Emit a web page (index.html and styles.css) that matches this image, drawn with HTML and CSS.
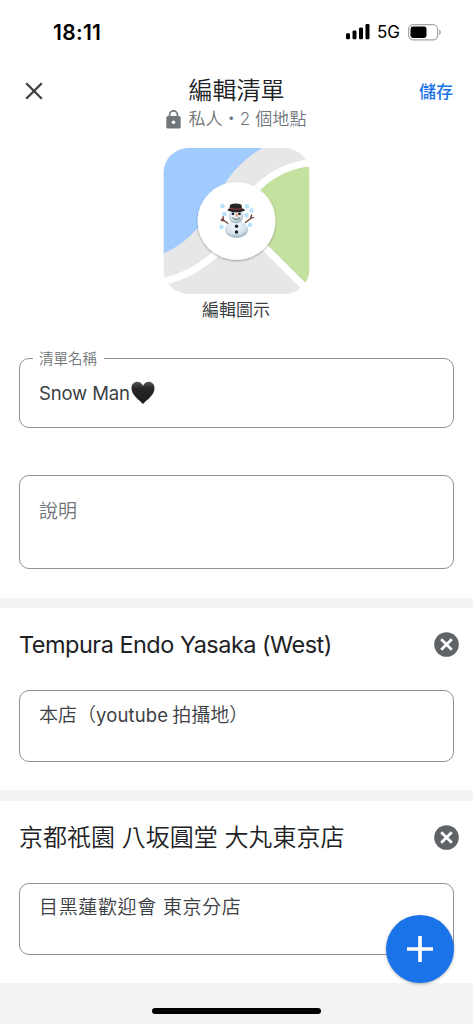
FILE: index.html
```html
<!DOCTYPE html>
<html lang="zh-Hant">
<head>
<meta charset="utf-8">
<meta name="viewport" content="width=device-width">
<title>編輯清單</title>
<link rel="stylesheet" href="styles.css">
</head>
<body>
<main class="screen">
  <div class="status">
    <span class="clock">18:11</span>
    <div class="signals">
      <svg class="bars" width="24" height="16" viewBox="0 0 24 16"><rect x="0" y="9.2" width="4" height="6" rx="1.2"/><rect x="6.5" y="6.5" width="4" height="8.7" rx="1.2"/><rect x="13" y="3.5" width="4" height="11.7" rx="1.2"/><rect x="19.5" y="0" width="4" height="15.2" rx="1.2"/></svg>
      <span class="network">5G</span>
      <svg class="battery" width="34" height="17" viewBox="0 0 34 17"><rect x=".6" y=".6" width="29" height="15.3" rx="4.6" fill="none" stroke="#a6a6a6" stroke-width="1.2"/><rect x="2.5" y="2.5" width="16" height="11.5" rx="2.4"/><path d="M31.2 5.6c2.2.7 2.2 4.600 0 5.300z" fill="#a6a6a6"/></svg>
    </div>
  </div>

  <header class="header">
    <button class="close" aria-label="關閉"><svg width="18" height="18" viewBox="0 0 18 18"><path d="M1.200 1.200l15.600 15.600M16.800 1.200l-15.600 15.600" stroke="#3c4043" stroke-width="2.300" fill="none"/></svg></button>
    <div class="heading">
      <h1 class="title">編輯清單</h1>
      <div class="privacy">
        <svg width="15" height="19" viewBox="0 0 15 19"><path d="M3.600 7V4.800a3.900 3.900 0 0 1 7.800 0V7" fill="none" stroke="#70757a" stroke-width="1.700"/><rect x=".3" y="6" width="14.400" height="12.600" rx="1.700" fill="#70757a"/><circle cx="7.500" cy="12.300" r="1.800" fill="#fff"/></svg>
        <span>私人・2 個地點</span>
      </div>
    </div>
    <button class="save">儲存</button>
  </header>

  <section class="cover">
    <svg class="map" width="147" height="146" viewBox="-.5 0 147 146">
      <defs>
        <clipPath id="tile"><rect width="146" height="146" rx="25"/></clipPath>
        <filter id="lift" x="-20%" y="-20%" width="140%" height="140%"><feDropShadow dx="0" dy="1" stdDeviation="1.200" flood-opacity=".35"/></filter>
        <radialGradient id="snow" cx=".45" cy=".3" r=".75"><stop offset="0" stop-color="#f5fbff"/><stop offset=".6" stop-color="#d6e3ec"/><stop offset="1" stop-color="#8da5b3"/></radialGradient>
      </defs>
      <g clip-path="url(#tile)">
        <path fill="#e7e7e7" d="M0 0h146v146H0z"/>
        <path fill="#a1cbff" d="M0 0h99C83 9 71 21 61 36C54 51 46 66 34 80Q20 97 0 105.500z"/>
        <path fill="#c5e1a0" d="M146 18C125 20 108 29 94 45L95 91L142 136L146 134z"/>
        <path d="M148 14.500C124 17 105 27 90 44" fill="none" stroke="#fff" stroke-width="7"/>
        <path d="M0 133.500Q29 127 52 106M98 96l43 43" fill="none" stroke="#fff" stroke-width="7"/>
      </g>
      <circle cx="73" cy="73" r="39" fill="#fff" filter="url(#lift)"/>
      <g fill="#b9e2fb"><circle cx="59" cy="58" r="2.300"/><circle cx="83.500" cy="58.500" r="2.300"/><circle cx="88" cy="62.500" r="2.300"/><circle cx="61" cy="66" r="2.300"/><circle cx="83" cy="67" r="2.200"/><circle cx="58" cy="79" r="2.300"/><circle cx="86.500" cy="77" r="2.300"/></g>
      <path d="M64.500 75.500l-6-4.500m1.500 1-.500-3.500m1 4.300-3-.600M82 74.500l5-4 1.200-3.500m-1.400 3.700 3-1.200" fill="none" stroke="#6a4336" stroke-width="1.300" stroke-linecap="round"/>
      <ellipse cx="73" cy="81.500" rx="11.500" ry="8.500" fill="url(#snow)"/>
      <circle cx="72.500" cy="68" r="7.300" fill="url(#snow)"/>
      <path d="M64 62.500q0-1.500 2-2l.5-3.700q6-2.500 11.500 0l.5 3.500q3 .700 3 2.200-8 4-17.500 0z" fill="#292626"/>
      <path d="M66.300 60.300q6 2.200 12 0" stroke="#98414a" stroke-width="1" fill="none"/>
      <g fill="#242424"><circle cx="69.500" cy="65.800" r="1.400"/><circle cx="76" cy="65.800" r="1.400"/><circle cx="73" cy="78.300" r="1.700"/><circle cx="73" cy="84" r="1.700"/></g>
      <path d="M69 69.700q4 3.500 7.500 0" stroke="#454545" stroke-width=".9" fill="none"/>
      <path d="M72.200 66h2l-.7 4z" fill="#f26a20"/>
    </svg>
    <div class="cover-label">編輯圖示</div>
  </section>

  <section class="details">
    <div class="field name-field">
      <span class="field-label">清單名稱</span>
      <span class="name-text">Snow Man</span><svg class="heart" width="24" height="24" viewBox="0 0 24 24" role="img" aria-label="黑心"><defs><linearGradient id="ink" x2="0" y2="1"><stop stop-color="#555"/><stop offset=".28" stop-color="#282828"/><stop offset="1" stop-color="#1b1b1b"/></linearGradient></defs><path d="M12 23C8.500 19 .5 14.500.5 7.300C.5 3 3.200.8 6.300.8C9 .8 11.200 2.600 12 5C12.800 2.600 15 .8 17.700.8C20.800.8 23.500 3 23.500 7.300C23.500 14.500 15.500 19 12 23Z" fill="url(#ink)"/></svg>
    </div>
    <div class="field description">說明</div>
  </section>

  <section class="place">
    <div class="place-head">
      <h2 class="place-name place-name-latin">Tempura Endo Yasaka (West)</h2>
      <button class="remove" aria-label="移除"><svg width="25" height="25" viewBox="0 0 25 25"><circle cx="12.500" cy="12.500" r="12.300" fill="#5f6368"/><path d="M7.200 7.200l10.600 10.600M17.800 7.200l-10.600 10.600" stroke="#fff" stroke-width="2.700"/></svg></button>
    </div>
    <div class="field note">本店（<span class="note-latin">youtube</span><span class="note-tail">拍攝地）</span></div>
  </section>

  <section class="place place-second">
    <div class="place-head">
      <h2 class="place-name">京都祇園 八坂圓堂 大丸東京店</h2>
      <button class="remove" aria-label="移除"><svg width="25" height="25" viewBox="0 0 25 25"><circle cx="12.500" cy="12.500" r="12.300" fill="#5f6368"/><path d="M7.200 7.200l10.600 10.600M17.800 7.200l-10.600 10.600" stroke="#fff" stroke-width="2.700"/></svg></button>
    </div>
    <div class="field note note-spaced">目黑蓮歡迎會 東京分店</div>
  </section>

  <footer class="home"><div class="home-bar"></div></footer>
  <button class="add" aria-label="新增"><svg width="26" height="26" viewBox="0 0 26 26"><path d="M13 0v26M0 13h26" stroke="#fff" stroke-width="3.600"/></svg></button>
</main>
</body>
</html>
```

FILE: styles.css
```css
* { box-sizing: border-box; }
body { margin: 0; background: #fff; }
button { border: 0; padding: 0; background: none; font: inherit; }
svg { display: block; flex: none; }
h1, h2 { margin: 0; font-weight: 350; }

.screen {
  position: relative;
  display: flex;
  flex-direction: column;
  width: 473px;
  height: 1024px;
  overflow: hidden;
  color: #202124;
  font-family: Inter, "Noto Sans CJK TC", sans-serif;
  font-weight: 350;
}
.screen > * { flex: none; }

.status { height: 64px; padding: 0 31px 0 53px; display: flex; align-items: center; justify-content: space-between; color: #000; }
.clock { font-size: 21px; font-weight: 600; letter-spacing: .3px; }
.signals { display: flex; align-items: center; }
.network { margin: 0 8px 0 7px; font-size: 17px; font-weight: 400; line-height: 20px; }

.header { height: 84px; padding: 0 20px 0 25px; display: grid; grid-template-columns: 80px 1fr 85px; align-items: start; }
.close { margin-top: 18px; justify-self: start; }
.heading { display: flex; flex-direction: column; align-items: center; }
.title { font-size: 24px; line-height: 32px; margin-top: 11px; }
.privacy { display: flex; align-items: center; gap: 7px; height: 24px; font-size: 17px; letter-spacing: .1px; color: #70757a; white-space: nowrap; }
.privacy span { line-height: 24px; }
.save { justify-self: end; margin-top: 16px; font-size: 17px; line-height: 24px; font-weight: 500; color: #1a73e8; }

.cover { height: 176px; display: flex; flex-direction: column; align-items: center; }
.cover-label { font-size: 17px; line-height: 24px; margin-top: 4px; padding-right: 1px; font-weight: 400; color: #3c4043; }

.details { height: 274px; padding: 34px 19px 0; display: flex; flex-direction: column; gap: 47px; }
.field { border: 1.5px solid #8f9499; border-radius: 10px; font-size: 19px; color: #3c4043; }
.name-field { position: relative; height: 70px; display: flex; align-items: center; padding-left: 19px; }
.name-text { font-size: 18.5px; font-weight: 400; letter-spacing: -.15px; }
.field-label { position: absolute; left: 13px; top: -10px; padding: 0 7px 0 6px; background: #fff; font-size: 14.5px; line-height: 20px; color: #70757a; }
.heart { margin-left: 1px; }
.description { height: 94px; padding: 22px 19px; line-height: 28px; color: #70757a; }

.place { height: 192px; border-top: 10px solid #f1f3f4; padding: 21px 14px 0 19px; }
.place-second { height: 193px; border-top-width: 11px; }
.place-head { display: flex; justify-content: space-between; align-items: center; height: 31px; }
.place-name { font-size: 24px; line-height: 31px; white-space: nowrap; }
.place-name-latin { font-size: 23.5px; font-weight: 400; letter-spacing: -.52px; }
.note { height: 72px; margin: 30px 5px 0 0; padding: 10px 19px; line-height: 28px; white-space: nowrap; }
.note-spaced { letter-spacing: .65px; }
.note-latin { font-size: 18.5px; font-weight: 400; letter-spacing: .15px; }
.note-tail { margin-left: 4px; }

.home { height: 41px; background: #f1f3f4; display: flex; justify-content: center; align-items: flex-start; padding-top: 25px; }
.home-bar { width: 169px; height: 6px; border-radius: 3px; background: #000; }
.add { position: absolute; right: 19px; top: 915px; width: 68px; height: 68px; border-radius: 50%; background: #1a73e8; display: grid; place-items: center; box-shadow: 0 1px 3px rgba(60,64,67,.4); }
```
